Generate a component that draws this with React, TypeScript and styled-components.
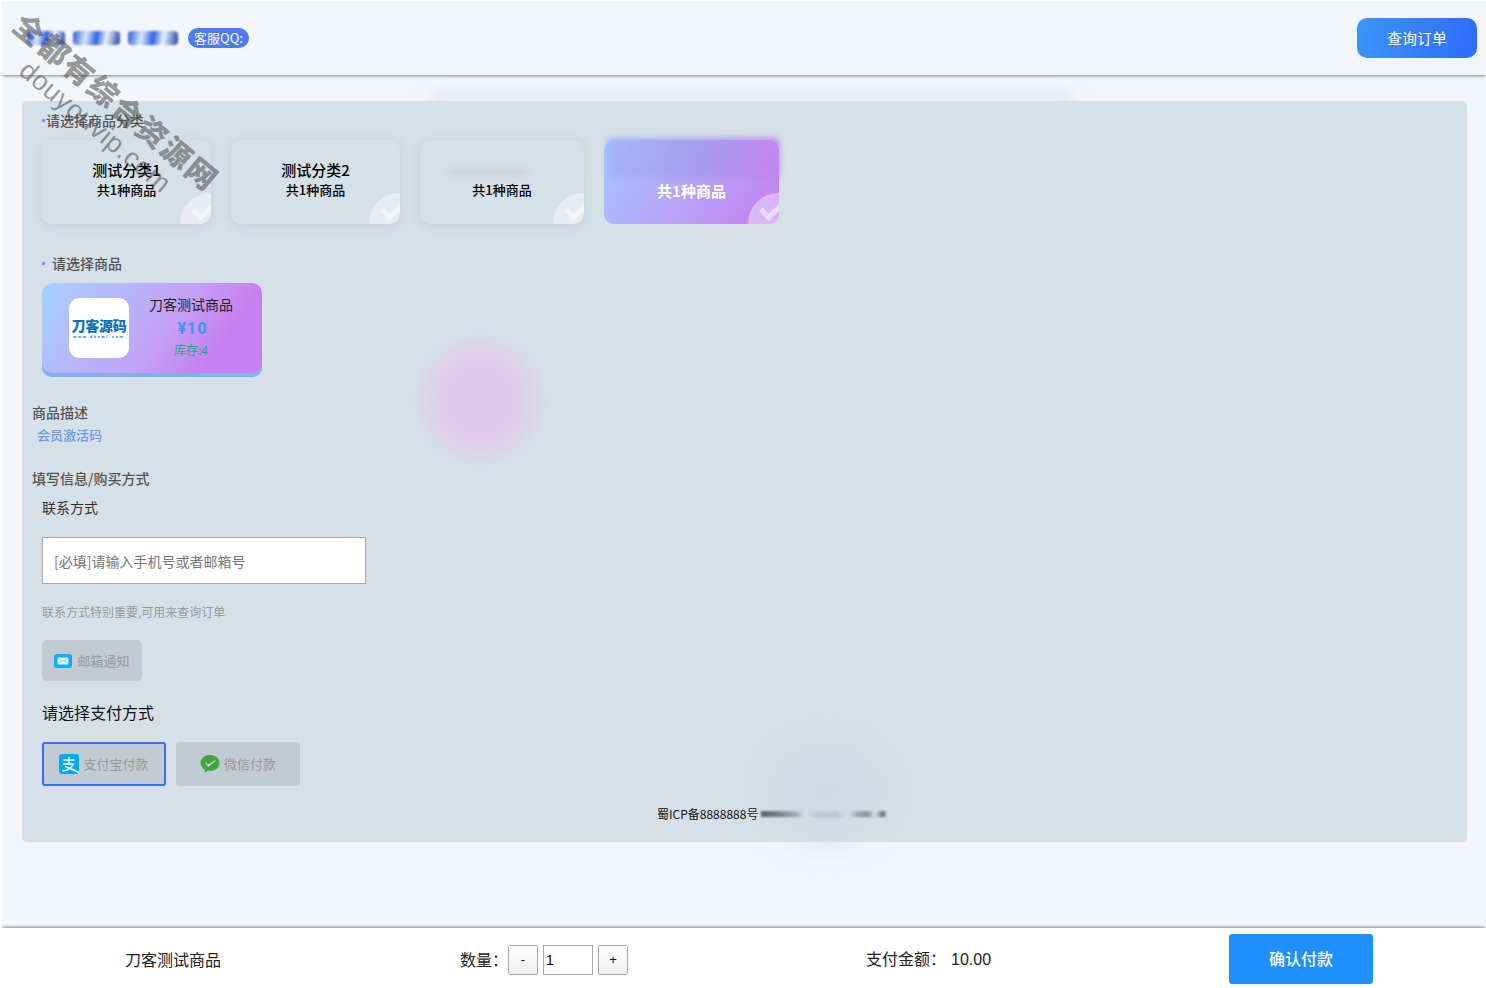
import React from "react";
import styled, { createGlobalStyle } from "styled-components";

const Global = createGlobalStyle`
  html, body { margin: 0; padding: 0; background: #fff; }
  body { font-family: "Noto Sans CJK SC", "Microsoft YaHei", sans-serif; overflow: hidden; }
  * { box-sizing: border-box; }
`;

const Page = styled.div`
  position: relative;
  height: 987px;
  margin: 1px 0 0 2px;
  display: flex;
  flex-direction: column;
  background: #f3f6fb;
  overflow: hidden;
`;

const Header = styled.header`
  height: 74px;
  flex: none;
  display: flex;
  align-items: center;
  padding: 0 9px 0 25px;
  background: #f3f6fb;
  box-shadow: 0 2px 3px -1px rgba(50, 50, 50, 0.6);
`;

const BlurLogo = styled.div`
  width: 151px;
  height: 18px;
  margin-right: 10px;
  display: flex;
  gap: 8px;
  align-items: center;
`;

const LogoSmear = styled.span<{ $w: number }>`
  width: ${(p) => p.$w}px;
  height: 14px;
  border-radius: 4px;
  background: linear-gradient(100deg, #2a58d8 0%, #dbe7ff 28%, #2f63df 50%, #eef3ff 70%, #1f3f9f 100%);
  filter: blur(1px);
`;

const QQBadge = styled.span`
  display: block;
  width: 61px;
  height: 20px;
  border-radius: 10px;
  background: #4c7cf3;
  color: #fff;
  font-size: 13px;
  line-height: 20px;
  text-align: center;
`;

const QueryButton = styled.button`
  margin-left: auto;
  width: 120px;
  height: 40px;
  padding: 0 0 2px;
  border: 0;
  border-radius: 10px;
  background: linear-gradient(100deg, #3a96f8, #2f6bfd);
  color: #fff;
  font: inherit;
  font-size: 15px;
`;

const Panel = styled.main`
  position: relative;
  margin: 26px 19px 0 20px;
  height: 741px;
  flex: none;
  padding: 9px 10px 0;
  border-radius: 5px;
  background: #d6e0e9;
`;

const Heading = styled.div<{ $dotGap: number }>`
  display: flex;
  align-items: center;
  gap: ${(p) => p.$dotGap}px;
  height: 20px;
  padding-left: 10px;
  font-size: 14px;
  font-weight: 500;
  color: #555;
  &::before {
    content: "";
    width: 3px;
    height: 3px;
    border-radius: 50%;
    background: #7c7cf5;
    box-shadow: 0 0 2px #a0a0ff;
  }
`;

const CategoryRow = styled.div`
  display: flex;
  gap: 20px;
  margin: 10px 0 0 10px;
`;

const Category = styled.div<{ $w: number; $active?: boolean }>`
  position: relative;
  width: ${(p) => p.$w}px;
  height: 84px;
  padding-top: 20px;
  border-radius: 10px;
  overflow: hidden;
  text-align: center;
  color: ${(p) => (p.$active ? "#fff" : "#000")};
  background: ${(p) => (p.$active ? "linear-gradient(125deg, #a8c8ff, #c67ff0)" : "#d6e0e9")};
  box-shadow: ${(p) => (p.$active ? "none" : "0 2px 8px rgba(170, 185, 200, 0.45)")};
`;

const CategoryShell = styled.div`
  position: relative;
`;

const CategoryName = styled.div`
  height: 20px;
  font-size: 15px;
  line-height: 20px;
  font-weight: 500;
`;

const CategoryCount = styled.div<{ $active?: boolean }>`
  font-size: ${(p) => (p.$active ? 15 : 13)}px;
  line-height: ${(p) => (p.$active ? 22 : 20)}px;
  font-weight: ${(p) => (p.$active ? 700 : 500)};
`;

const Corner = styled.span`
  position: absolute;
  right: -30px;
  bottom: -30px;
  width: 61px;
  height: 61px;
  border-radius: 50%;
  background: rgba(255, 255, 255, 0.4);
  &::after {
    content: "";
    position: absolute;
    left: 13px;
    top: 9px;
    width: 15px;
    height: 9px;
    border-left: 5px solid rgba(255, 255, 255, 0.5);
    border-bottom: 5px solid rgba(255, 255, 255, 0.5);
    transform: rotate(-45deg);
  }
`;

const Smudge = styled.span`
  position: absolute;
  left: 3px;
  right: 0;
  top: -2px;
  height: 40px;
  border-radius: 4px;
  background: linear-gradient(110deg, #a3b7f5, #a89bee 55%, #c582ee);
  filter: blur(3px);
`;

const PaleSmudge = styled.span`
  position: absolute;
  left: 4px;
  right: 4px;
  top: 5px;
  height: 32px;
  background: #d6e0e9;
  filter: blur(3px);
  &::after {
    content: "";
    position: absolute;
    left: 26px;
    right: 54px;
    top: 26px;
    height: 3px;
    background: #b8c0c8;
    filter: blur(1px);
  }
`;

const ProductSection = styled.section`
  margin-top: 29px;
`;

const ProductCard = styled.div`
  width: 220px;
  height: 94px;
  margin: 10px 0 0 10px;
  padding: 15px 0 0 27px;
  display: flex;
  border-radius: 10px;
  background: linear-gradient(125deg, #a6d2ff 0%, #c4a0f5 55%, #c67ff0 78%);
  box-shadow: inset 0 -4px 0 #80b0f2;
`;

const ProductLogo = styled.div`
  width: 60px;
  height: 60px;
  flex: none;
  display: flex;
  flex-direction: column;
  align-items: center;
  justify-content: center;
  border-radius: 10px;
  background: #fff;
  color: #0e6fb8;
`;

const LogoTitle = styled.span`
  font-size: 14px;
  line-height: 17px;
  font-weight: 900;
  letter-spacing: -0.3px;
  white-space: nowrap;
`;

const LogoUrl = styled.span`
  font-family: "Liberation Sans", sans-serif;
  font-size: 4px;
  line-height: 6px;
  font-weight: 700;
  letter-spacing: 1.6px;
  white-space: nowrap;
`;

const ProductInfo = styled.div`
  width: 124px;
  text-align: center;
`;

const ProductName = styled.div`
  margin-top: -4px;
  font-size: 14px;
  line-height: 20px;
  color: #222;
`;

const ProductPrice = styled.div`
  margin-top: 4px;
  padding-left: 3px;
  font-family: Roboto, sans-serif;
  font-size: 16px;
  line-height: 22px;
  font-weight: 700;
  letter-spacing: 1px;
  color: #3a96f5;
`;

const ProductStock = styled.div`
  font-size: 12px;
  line-height: 20px;
  color: #0db365;
`;

const Label = styled.div<{ $top: number }>`
  height: 20px;
  margin-top: ${(p) => p.$top}px;
  font-size: 14px;
  line-height: 18px;
  font-weight: 500;
  color: #555;
`;

const Description = styled.div`
  height: 20px;
  margin: 3px 0 0 5px;
  font-size: 13px;
  line-height: 18px;
  font-weight: 500;
  color: #6d97ea;
`;

const FormBlock = styled.div`
  padding-left: 10px;
`;

const ContactLabel = styled.div`
  height: 20px;
  margin-top: 9px;
  font-size: 14px;
  line-height: 18px;
  color: #333;
`;

const ContactInput = styled.input`
  display: block;
  width: 324px;
  height: 47px;
  margin-top: 19px;
  padding: 0 11px;
  border: 1px solid #a9a9a9;
  background: #fff;
  font: inherit;
  font-size: 14px;
  &::placeholder { color: #777; opacity: 1; }
`;

const Hint = styled.div`
  margin-top: 18px;
  font-size: 12px;
  line-height: 20px;
  color: #999;
`;

const Choice = styled.div<{ $selected?: boolean }>`
  display: flex;
  align-items: center;
  justify-content: center;
  gap: 4px;
  height: 44px;
  width: 124px;
  padding-bottom: 1px;
  border-radius: 3px;
  background: #c2cad3;
  border: ${(p) => (p.$selected ? "2px solid #3a6cf5" : "0")};
  font-size: 13px;
  line-height: 18px;
  color: #999;
`;

const MailChoice = styled(Choice)`
  width: 100px;
  height: 41px;
  margin-top: 18px;
  padding-bottom: 0;
  gap: 5px;
  border-radius: 5px;
`;

const PayTitle = styled.div`
  margin-top: 20px;
  font-size: 16px;
  line-height: 22px;
  color: #111;
`;

const PayRow = styled.div`
  display: flex;
  gap: 10px;
  margin-top: 19px;
`;

const Icp = styled.div`
  position: relative;
  width: 230px;
  margin: 18px 0 0 625px;
  font-size: 12px;
  line-height: 20px;
  color: #111;
`;

const IcpSmear = styled.span`
  position: absolute;
  left: 104px;
  top: 7px;
  width: 126px;
  height: 6px;
  background: linear-gradient(
    90deg,
    #555 0%,
    #333 28%,
    #eef2f6 36%,
    #333 45%,
    #333 60%,
    #eef2f6 68%,
    #333 76%,
    #333 84%,
    #d6e0e9 90%,
    #444 97%,
    #d6e0e9 100%
  );
  filter: blur(1px);
`;

const BottomBar = styled.footer`
  position: absolute;
  left: 0;
  right: 0;
  bottom: 0;
  height: 60px;
  display: flex;
  align-items: center;
  background: #fff;
  box-shadow: 0 -2px 3px -1px rgba(50, 50, 50, 0.55);
  font-size: 16px;
  color: #222;
`;

const BarName = styled.span`
  width: 458px;
  margin-top: 2px;
  padding-left: 123px;
`;

const Qty = styled.div`
  width: 406px;
  margin-top: 3px;
  display: flex;
  align-items: center;
  gap: 5px;
`;

const QtyLabel = styled.span`
  width: 43px;
  flex: none;
  margin-top: -2px;
  white-space: nowrap;
`;

const QtyButton = styled.button`
  width: 30px;
  height: 30px;
  padding: 0;
  border: 1px solid #a9a9a9;
  border-radius: 2px;
  background: linear-gradient(#fff, #efefef);
  font-family: "Liberation Sans", sans-serif;
  font-size: 13px;
  color: #111;
`;

const QtyInput = styled.input`
  width: 50px;
  height: 30px;
  padding: 0 2px;
  border: 1px solid #a9a9a9;
  background: #fff;
  font-family: "Liberation Sans", sans-serif;
  font-size: 14px;
`;

const Amount = styled.div`
  width: 363px;
  display: flex;
  align-items: center;
`;

const AmountValue = styled.span`
  margin: 4px 0 0 5px;
  font-family: "Liberation Sans", sans-serif;
  font-size: 16px;
`;

const ConfirmButton = styled.button`
  width: 144px;
  height: 50px;
  margin-top: 2px;
  padding: 0 0 2px;
  border: 0;
  border-radius: 3px;
  background: #1e90ff;
  color: #fff;
  font: inherit;
  font-size: 16px;
  font-weight: 500;
`;

const Watermark = styled.div`
  position: absolute;
  left: -40px;
  top: 78px;
  width: 290px;
  transform: rotate(40deg);
  color: rgba(70, 70, 70, 0.55);
  text-align: center;
  pointer-events: none;
`;

const WatermarkTitle = styled.div`
  font-size: 30px;
  line-height: 36px;
  font-weight: 900;
  letter-spacing: 2px;
  white-space: nowrap;
`;

const WatermarkUrl = styled.div`
  font-family: "Liberation Sans", sans-serif;
  font-size: 27px;
  line-height: 32px;
  letter-spacing: 0.5px;
  white-space: nowrap;
`;

const Blob = styled.div`
  position: absolute;
  left: 408px;
  top: 329px;
  width: 140px;
  height: 140px;
  border-radius: 50%;
  background: radial-gradient(
    circle,
    #e2c8ec 0%,
    rgba(226, 200, 236, 0.92) 35%,
    rgba(226, 200, 236, 0.45) 55%,
    rgba(226, 200, 236, 0) 71%
  );
  pointer-events: none;
`;

const Haze = styled.div`
  position: absolute;
  left: 430px;
  top: 94px;
  width: 640px;
  height: 12px;
  background: #dbe3ec;
  filter: blur(8px);
  pointer-events: none;
`;

const LowHaze = styled.div`
  position: absolute;
  left: 770px;
  top: 745px;
  width: 110px;
  height: 90px;
  border-radius: 50%;
  background: #d0dae4;
  filter: blur(16px);
  pointer-events: none;
`;

const MailIcon = () => (
  <svg width="18" height="14" viewBox="0 0 18 14">
    <rect width="18" height="14" rx="3" fill="#07b0fb" />
    <rect x="3.5" y="3.5" width="11" height="7" rx="1" fill="#e6f6ff" />
    <path d="M3.5 4 9 7.5 14.5 4M3.5 10 7 7M14.5 10 11 7" stroke="#7ac" strokeWidth="0.7" fill="none" />
  </svg>
);

const AlipayIcon = () => (
  <svg width="20" height="20" viewBox="0 0 20 20">
    <rect width="20" height="20" rx="3" fill="#07a8f5" />
    <path
      d="M4.5 6H15.5M10 3V10M4 10H15M14.2 10C12.6 14 9 16.5 3.5 17M6 12.5C10 13.5 14 15.5 20 18.5"
      stroke="#fff"
      strokeWidth="1.5"
      fill="none"
    />
  </svg>
);

const WechatIcon = () => (
  <svg width="20" height="18" viewBox="0 0 20 18">
    <ellipse cx="10" cy="8" rx="9.5" ry="8" fill="#46a33b" />
    <path d="M5 13.5 4.5 17.5 9 15z" fill="#46a33b" />
    <path d="M5.5 7.5 8 10 15.5 5.5 8.2 11.5z" fill="#e4ece4" stroke="#e4ece4" strokeWidth="0.5" />
  </svg>
);

const categories = [
  { name: "测试分类1", w: 169 },
  { name: "测试分类2", w: 169 },
  { name: "", w: 164, pale: true },
  { name: "", w: 175, active: true },
];

export default function App() {
  return (
    <Page>
      <Global />
      <Header>
        <BlurLogo>
          <LogoSmear $w={38} />
          <LogoSmear $w={48} />
          <LogoSmear $w={50} />
        </BlurLogo>
        <QQBadge>客服QQ:</QQBadge>
        <QueryButton>查询订单</QueryButton>
      </Header>
      <Panel>
        <Heading $dotGap={1}>请选择商品分类</Heading>
        <CategoryRow>
          {categories.map((c, i) => (
            <CategoryShell key={i}>
              <Category $w={c.w} $active={c.active}>
                <CategoryName>{c.name}</CategoryName>
                <CategoryCount $active={c.active}>共1种商品</CategoryCount>
                <Corner />
              </Category>
              {c.active && <Smudge />}
              {c.pale && <PaleSmudge />}
            </CategoryShell>
          ))}
        </CategoryRow>
        <ProductSection>
          <Heading $dotGap={7}>请选择商品</Heading>
          <ProductCard>
            <ProductLogo>
              <LogoTitle>刀客源码</LogoTitle>
              <LogoUrl>www.dkewl.com</LogoUrl>
            </ProductLogo>
            <ProductInfo>
              <ProductName>刀客测试商品</ProductName>
              <ProductPrice>¥10</ProductPrice>
              <ProductStock>库存:4</ProductStock>
            </ProductInfo>
          </ProductCard>
        </ProductSection>
        <Label $top={26}>商品描述</Label>
        <Description>会员激活码</Description>
        <Label $top={23}>填写信息/购买方式</Label>
        <FormBlock>
          <ContactLabel>联系方式</ContactLabel>
          <ContactInput placeholder="[必填]请输入手机号或者邮箱号" />
          <Hint>联系方式特别重要,可用来查询订单</Hint>
          <MailChoice>
            <MailIcon />
            邮箱通知
          </MailChoice>
          <PayTitle>请选择支付方式</PayTitle>
          <PayRow>
            <Choice $selected>
              <AlipayIcon />
              支付宝付款
            </Choice>
            <Choice>
              <WechatIcon />
              微信付款
            </Choice>
          </PayRow>
        </FormBlock>
        <Icp>
          蜀ICP备8888888号
          <IcpSmear />
        </Icp>
      </Panel>
      <Haze />
      <LowHaze />
      <Blob />
      <BottomBar>
        <BarName>刀客测试商品</BarName>
        <Qty>
          <QtyLabel>{"数量\uFF1A"}</QtyLabel>
          <QtyButton>-</QtyButton>
          <QtyInput defaultValue="1" />
          <QtyButton>+</QtyButton>
        </Qty>
        <Amount>
          {"支付金额\uFF1A"}
          <AmountValue>10.00</AmountValue>
        </Amount>
        <ConfirmButton>确认付款</ConfirmButton>
      </BottomBar>
      <Watermark>
        <WatermarkTitle>全都有综合资源网</WatermarkTitle>
        <WatermarkUrl>douyouvip.com</WatermarkUrl>
      </Watermark>
    </Page>
  );
}
